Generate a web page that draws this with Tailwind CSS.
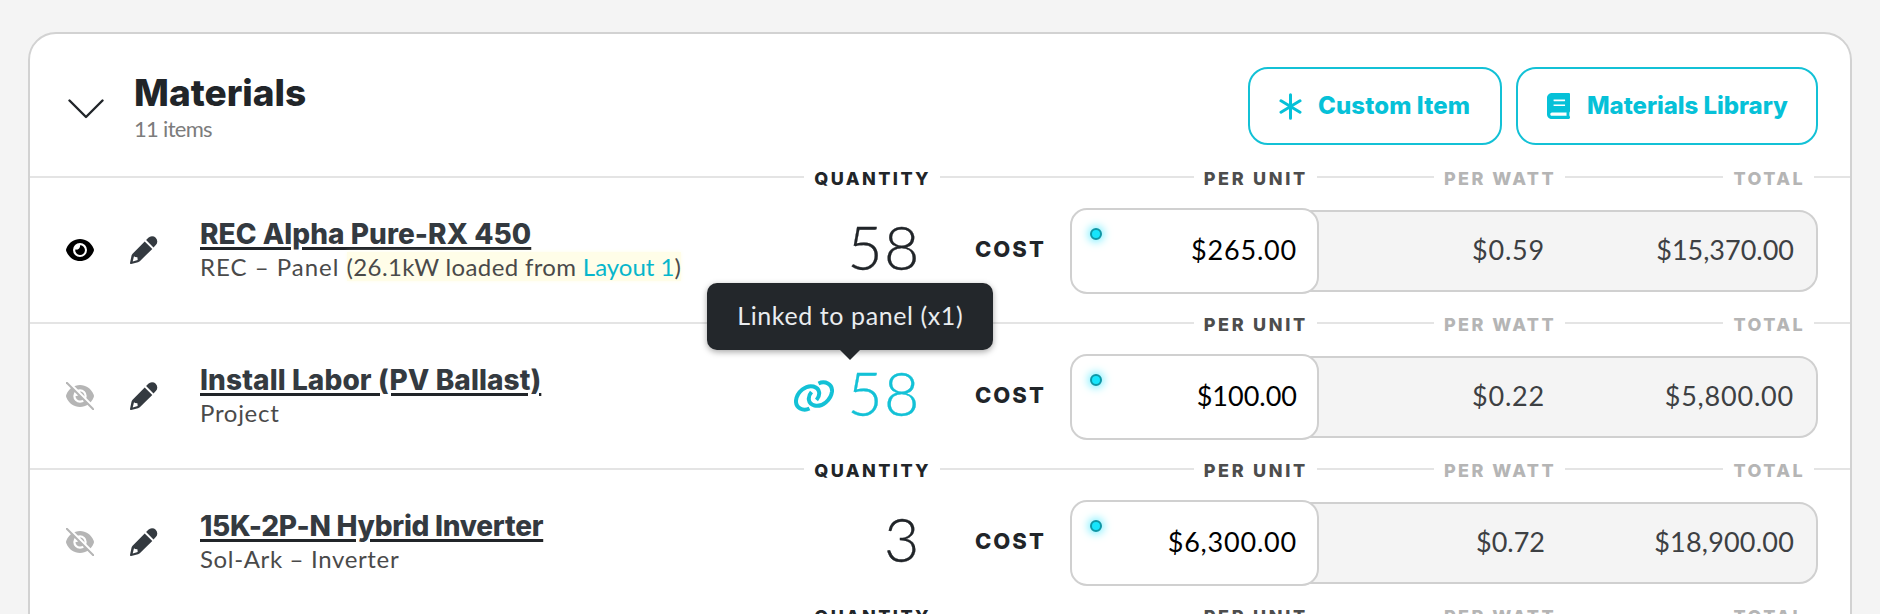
<!DOCTYPE html>
<html lang="en">
<head>
    <meta charset="UTF-8">
    <meta name="viewport" content="width=device-width, initial-scale=1.0">
    <title>Materials</title>
    <script src="https://cdn.jsdelivr.net/npm/@tailwindcss/browser@4"></script>
</head>
<body class="h-screen overflow-hidden bg-[#f4f4f4] pt-8 px-7 font-['Lato',sans-serif] text-[#212529]">
    <svg class="hidden">
        <symbol id="eye" viewBox="0 0 28 28">
            <path fill-rule="evenodd" d="M14 3C8 3 3 6.500.4 12.500a3.500 3.500 0 0 0 0 3C3 21.500 8 25 14 25s11-3.500 13.600-9.500a3.500 3.500 0 0 0 0-3C25 6.500 20 3 14 3zm0 4a7 7 0 1 1 0 14 7 7 0 0 1 0-14z" />
            <path d="M14 9.200c.5 3-2 4.800-4.800 4.400A4.900 4.900 0 1 0 14 9.200z" />
        </symbol>
        <symbol id="eye-off" viewBox="0 0 28 28">
            <path fill-rule="evenodd" d="M14 3C8 3 3 6.500.4 12.500a3.500 3.500 0 0 0 0 3C3 21.500 8 25 14 25s11-3.500 13.600-9.500a3.500 3.500 0 0 0 0-3C25 6.500 20 3 14 3zm0 4.300a6.700 6.700 0 1 1 0 13.400 6.700 6.700 0 0 1 0-13.400z" />
            <path d="M14 9.500c.5 3-1.500 4.500-4.500 4.500A4.500 4.500 0 1 0 14 9.500z" />
            <path d="M1.500-1L29 26.500" stroke="#fff" stroke-width="2.500" />
            <path d="M.8.8l26.500 26.500" stroke="currentColor" stroke-width="2" stroke-linecap="round" />
        </symbol>
        <symbol id="pencil" viewBox="0 0 28 28">
            <path d="M18.300 1.800a5 5 0 0 1 7.500 7.300l-2.300 2.300-7.400-7.400z" />
            <path fill-rule="evenodd" d="M14.700 5.400l7.600 7.500-12.500 12.300a4 4 0 0 1-1.800 1L1.200 28c-.7.2-1.300-.4-1.200-1.100l1.500-7.200a4 4 0 0 1 1.100-2zM4 20.200l-1.300 5.200 5-1.400-.3-2.700-2.300-.3z" />
        </symbol>
    </svg>

    <div class="h-[700px] rounded-[28px] border-2 border-[#d2d2d2] bg-white">
        <!-- header -->
        <div class="flex h-[142px] items-center pl-[38px] pr-8">
            <svg class="mt-2 h-[20px] w-[36px]" viewBox="0 0 36 20" fill="none" stroke="#212529" stroke-width="2.400" stroke-linecap="round" stroke-linejoin="round">
                <path d="M1.500 1.500L18 18 34.500 1.500" />
            </svg>
            <div class="ml-[30px] flex-1 pt-[5px]">
                <h1 class="font-['Inter',sans-serif] text-[37px] leading-[42px] font-extrabold">Materials</h1>
                <p class="text-[22px] leading-[30px] tracking-[-0.700px] text-[#7c7c7c]">11 items</p>
            </div>
            <button class="mt-[2px] flex h-[78px] w-[254px] items-center rounded-[20px] border-2 border-[#13c1d6] pl-[29px] text-[#06c1d8]">
                <svg class="h-[27px] w-[23px]" viewBox="0 0 23 27" fill="none" stroke="currentColor" stroke-width="3" stroke-linecap="round">
                    <path d="M11.500 1.800v23.400M2 7.800l19 11.400M21 7.800L2 19.200" />
                </svg>
                <span class="ml-4 font-['Inter',sans-serif] text-[24px] font-extrabold tracking-[0.100px] whitespace-nowrap">Custom Item</span>
            </button>
            <button class="mt-[2px] ml-[14px] flex h-[78px] w-[302px] items-center rounded-[20px] border-2 border-[#13c1d6] pl-[29px] text-[#06c1d8]">
                <svg class="h-[26px] w-[23px]" viewBox="0 0 448 512" preserveAspectRatio="none" fill="currentColor">
                    <path d="M448 360V24c0-13.300-10.700-24-24-24H96C43 0 0 43 0 96v320c0 53 43 96 96 96h328c13.300 0 24-10.700 24-24v-16c0-7.500-3.500-14.300-8.900-18.700-4.200-15.400-4.200-59.300 0-74.700 5.400-4.300 8.900-11.100 8.900-18.600zM128 134c0-3.300 2.700-6 6-6h212c3.300 0 6 2.700 6 6v20c0 3.300-2.700 6-6 6H134c-3.300 0-6-2.700-6-6v-20zm0 96c0-3.300 2.700-6 6-6h212c3.300 0 6 2.700 6 6v20c0 3.300-2.700 6-6 6H134c-3.300 0-6-2.700-6-6v-20zm253.400 218H96c-17.700 0-32-14.300-32-32 0-17.600 14.400-32 32-32h285.400c-1.900 17.100-1.900 46.900 0 64z" />
                </svg>
                <span class="ml-[17px] font-['Inter',sans-serif] text-[24px] font-extrabold tracking-[-0.050px] whitespace-nowrap">Materials Library</span>
            </button>
        </div>

        <!-- REC Alpha -->
        <div class="relative flex h-[146px] items-center border-t-2 border-[#e4e4e4] pl-9 pr-8">
            <div class="absolute -top-[11px] right-[910px] bg-white pl-[10px] pr-[9px] font-['Inter',sans-serif] text-[18px] leading-6 font-extrabold tracking-[2.400px]">QUANTITY</div>
            <div class="absolute -top-[11px] right-[533px] bg-white pl-[10px] pr-[9px] font-['Inter',sans-serif] text-[18px] leading-6 font-extrabold tracking-[2.700px] text-[#4d4d4d]">PER UNIT</div>
            <div class="absolute -top-[11px] right-[285px] bg-white pl-[10px] pr-[9px] font-['Inter',sans-serif] text-[18px] leading-6 font-extrabold tracking-[2.400px] text-[#b5b5b5]">PER WATT</div>
            <div class="absolute -top-[11px] right-9 bg-white pl-[10px] pr-[9px] font-['Inter',sans-serif] text-[18px] leading-6 font-extrabold tracking-[2.400px] text-[#b5b5b5]">TOTAL</div>
            <svg class="size-7 fill-black"><use href="#eye" /></svg>
            <svg class="ml-9 size-7 fill-[#343a40]"><use href="#pencil" /></svg>
            <div class="ml-[42px] flex-1 whitespace-nowrap">
                <a class="block font-['Inter',sans-serif] text-[28px] leading-[34px] font-extrabold tracking-[0.050px] text-[#343a40] underline decoration-[#212529] decoration-3 underline-offset-3">REC Alpha Pure-RX 450</a>
                <p class="text-[24px] leading-[32px] tracking-[1px] text-[#4a4a4a]">REC – Panel <span class="bg-[#fffde8] tracking-[0.350px] shadow-[0_0_4px_#fffde8]">(26.1kW loaded from <a class="tracking-normal text-[#06b6cc]">Layout 1</a>)</span></p>
            </div>
            <div class="mb-[7px] text-right text-[61px] leading-[60px] font-light tracking-[1.500px] [-webkit-text-stroke:0.300px]">58</div>
            <div class="ml-[54px] w-[71px] pb-[2px] font-['Inter',sans-serif] text-[22px] font-extrabold tracking-[2px]">COST</div>
            <div class="ml-6 mt-[2px] flex w-[748px] items-center text-[27px] leading-9 tracking-[0.800px]">
                <div class="z-10 flex h-[86px] w-[249px] items-center justify-between rounded-[17px] border-2 border-[#d0d0d0] bg-white pl-[18px] pr-5 text-black">
                    <span class="mb-[34px] size-3 rounded-full border-2 border-[#0f97a6] bg-[#17e5fc] shadow-[0_0_8px_2px_#7fefff]"></span>
                    <span class="pb-[2px]">$265.00</span>
                </div>
                <div class="-ml-5 flex h-[82px] flex-1 items-center rounded-r-[19px] border-2 border-[#d0d0d0] bg-[#f4f4f4] pr-[22px] pb-[2px] text-[#3d4043]">
                    <span class="flex-1 text-right">$0.59</span>
                    <span class="w-[249px] text-right tracking-normal">$15,370.00</span>
                </div>
            </div>
        </div>

        <!-- Install Labor -->
        <div class="relative flex h-[146px] items-center border-t-2 border-[#e4e4e4] pl-9 pr-8">
            <div class="absolute -top-[11px] right-[533px] bg-white pl-[10px] pr-[9px] font-['Inter',sans-serif] text-[18px] leading-6 font-extrabold tracking-[2.700px] text-[#4d4d4d]">PER UNIT</div>
            <div class="absolute -top-[11px] right-[285px] bg-white pl-[10px] pr-[9px] font-['Inter',sans-serif] text-[18px] leading-6 font-extrabold tracking-[2.400px] text-[#b5b5b5]">PER WATT</div>
            <div class="absolute -top-[11px] right-9 bg-white pl-[10px] pr-[9px] font-['Inter',sans-serif] text-[18px] leading-6 font-extrabold tracking-[2.400px] text-[#b5b5b5]">TOTAL</div>
            <svg class="size-7 fill-[#b5b5b5] text-[#b5b5b5]"><use href="#eye-off" /></svg>
            <svg class="ml-9 size-7 fill-[#343a40]"><use href="#pencil" /></svg>
            <div class="ml-[42px] flex-1 whitespace-nowrap">
                <a class="block font-['Inter',sans-serif] text-[28px] leading-[34px] font-extrabold tracking-[0.100px] text-[#343a40] underline decoration-[#212529] decoration-3 underline-offset-3">Install Labor (PV Ballast)</a>
                <p class="text-[24px] leading-[32px] tracking-[0.700px] text-[#4a4a4a]">Project</p>
            </div>
            <div class="relative flex items-center text-[#13c1d6]">
                <svg class="mr-[13px] h-[32px] w-[40px]" viewBox="0 0 40 32" fill="none" stroke="currentColor" stroke-width="4" stroke-linecap="butt">
                    <path d="M15.500 28.500C9 31.500 1.500 28 2 20.500 3 12 12 4.500 19.500 6.500c7 2 7 9 3 13.500" />
                    <path d="M24.500 3.500C31 .5 38.500 4 38 11.500 37 20 28 27.500 20.500 25.500c-7-2-7-9-3-13.500" />
                </svg>
                <span class="mb-[7px] text-[61px] leading-[60px] font-light tracking-[1.500px] [-webkit-text-stroke:0.300px]">58</span>
                <!-- tooltip -->
                <div class="absolute bottom-[80px] left-[-87px] z-20 flex h-[67px] w-[286px] items-center justify-center rounded-[10px] bg-[#23272b] text-[25px] tracking-[0.600px] whitespace-nowrap text-[#e9ecef] shadow-[0_2px_6px_rgba(0,0,0,0.35)]">
                    Linked to panel (x1)
                    <svg class="absolute top-full left-[133px] h-[10px] w-[20px]" viewBox="0 0 20 10" fill="#23272b"><path d="M0 0h20L10 10z" /></svg>
                </div>
            </div>
            <div class="ml-[54px] w-[71px] pb-[2px] font-['Inter',sans-serif] text-[22px] font-extrabold tracking-[2px]">COST</div>
            <div class="ml-6 mt-[2px] flex w-[748px] items-center text-[27px] leading-9 tracking-[0.800px]">
                <div class="z-10 flex h-[86px] w-[249px] items-center justify-between rounded-[17px] border-2 border-[#d0d0d0] bg-white pl-[18px] pr-5 text-black">
                    <span class="mb-[34px] size-3 rounded-full border-2 border-[#0f97a6] bg-[#17e5fc] shadow-[0_0_8px_2px_#7fefff]"></span>
                    <span class="pb-[2px] tracking-normal">$100.00</span>
                </div>
                <div class="-ml-5 flex h-[82px] flex-1 items-center rounded-r-[19px] border-2 border-[#d0d0d0] bg-[#f4f4f4] pr-[22px] pb-[2px] text-[#3d4043]">
                    <span class="flex-1 text-right">$0.22</span>
                    <span class="w-[249px] text-right">$5,800.00</span>
                </div>
            </div>
        </div>

        <!-- Hybrid Inverter -->
        <div class="relative flex h-[146px] items-center border-t-2 border-[#e4e4e4] pl-9 pr-8">
            <div class="absolute -top-[11px] right-[910px] bg-white pl-[10px] pr-[9px] font-['Inter',sans-serif] text-[18px] leading-6 font-extrabold tracking-[2.400px]">QUANTITY</div>
            <div class="absolute -top-[11px] right-[533px] bg-white pl-[10px] pr-[9px] font-['Inter',sans-serif] text-[18px] leading-6 font-extrabold tracking-[2.700px] text-[#4d4d4d]">PER UNIT</div>
            <div class="absolute -top-[11px] right-[285px] bg-white pl-[10px] pr-[9px] font-['Inter',sans-serif] text-[18px] leading-6 font-extrabold tracking-[2.400px] text-[#b5b5b5]">PER WATT</div>
            <div class="absolute -top-[11px] right-9 bg-white pl-[10px] pr-[9px] font-['Inter',sans-serif] text-[18px] leading-6 font-extrabold tracking-[2.400px] text-[#b5b5b5]">TOTAL</div>
            <svg class="size-7 fill-[#b5b5b5] text-[#b5b5b5]"><use href="#eye-off" /></svg>
            <svg class="ml-9 size-7 fill-[#343a40]"><use href="#pencil" /></svg>
            <div class="ml-[42px] flex-1 whitespace-nowrap">
                <a class="block font-['Inter',sans-serif] text-[28px] leading-[34px] font-extrabold tracking-[-0.250px] text-[#343a40] underline decoration-[#212529] decoration-3 underline-offset-3">15K-2P-N Hybrid Inverter</a>
                <p class="text-[24px] leading-[32px] tracking-[0.650px] text-[#4a4a4a]">Sol-Ark – Inverter</p>
            </div>
            <div class="mb-[7px] text-right text-[61px] leading-[60px] font-light tracking-[1.500px] [-webkit-text-stroke:0.300px]">3</div>
            <div class="ml-[54px] w-[71px] pb-[2px] font-['Inter',sans-serif] text-[22px] font-extrabold tracking-[2px]">COST</div>
            <div class="ml-6 mt-[2px] flex w-[748px] items-center text-[27px] leading-9 tracking-[0.800px]">
                <div class="z-10 flex h-[86px] w-[249px] items-center justify-between rounded-[17px] border-2 border-[#d0d0d0] bg-white pl-[18px] pr-5 text-black">
                    <span class="mb-[34px] size-3 rounded-full border-2 border-[#0f97a6] bg-[#17e5fc] shadow-[0_0_8px_2px_#7fefff]"></span>
                    <span class="pb-[2px]">$6,300.00</span>
                </div>
                <div class="-ml-5 flex h-[82px] flex-1 items-center rounded-r-[19px] border-2 border-[#d0d0d0] bg-[#f4f4f4] pr-[22px] pb-[2px] text-[#3d4043]">
                    <span class="flex-1 text-right tracking-normal">$0.72</span>
                    <span class="w-[249px] text-right tracking-[0.200px]">$18,900.00</span>
                </div>
            </div>
        </div>

        <!-- next row, only its labels reach into the window -->
        <div class="relative border-t-2 border-[#e4e4e4]">
            <div class="absolute -top-[11px] right-[910px] bg-white pl-[10px] pr-[9px] font-['Inter',sans-serif] text-[18px] leading-6 font-extrabold tracking-[2.400px]">QUANTITY</div>
            <div class="absolute -top-[11px] right-[533px] bg-white pl-[10px] pr-[9px] font-['Inter',sans-serif] text-[18px] leading-6 font-extrabold tracking-[2.700px] text-[#4d4d4d]">PER UNIT</div>
            <div class="absolute -top-[11px] right-[285px] bg-white pl-[10px] pr-[9px] font-['Inter',sans-serif] text-[18px] leading-6 font-extrabold tracking-[2.400px] text-[#b5b5b5]">PER WATT</div>
            <div class="absolute -top-[11px] right-9 bg-white pl-[10px] pr-[9px] font-['Inter',sans-serif] text-[18px] leading-6 font-extrabold tracking-[2.400px] text-[#b5b5b5]">TOTAL</div>
        </div>
    </div>
</body>
</html>
